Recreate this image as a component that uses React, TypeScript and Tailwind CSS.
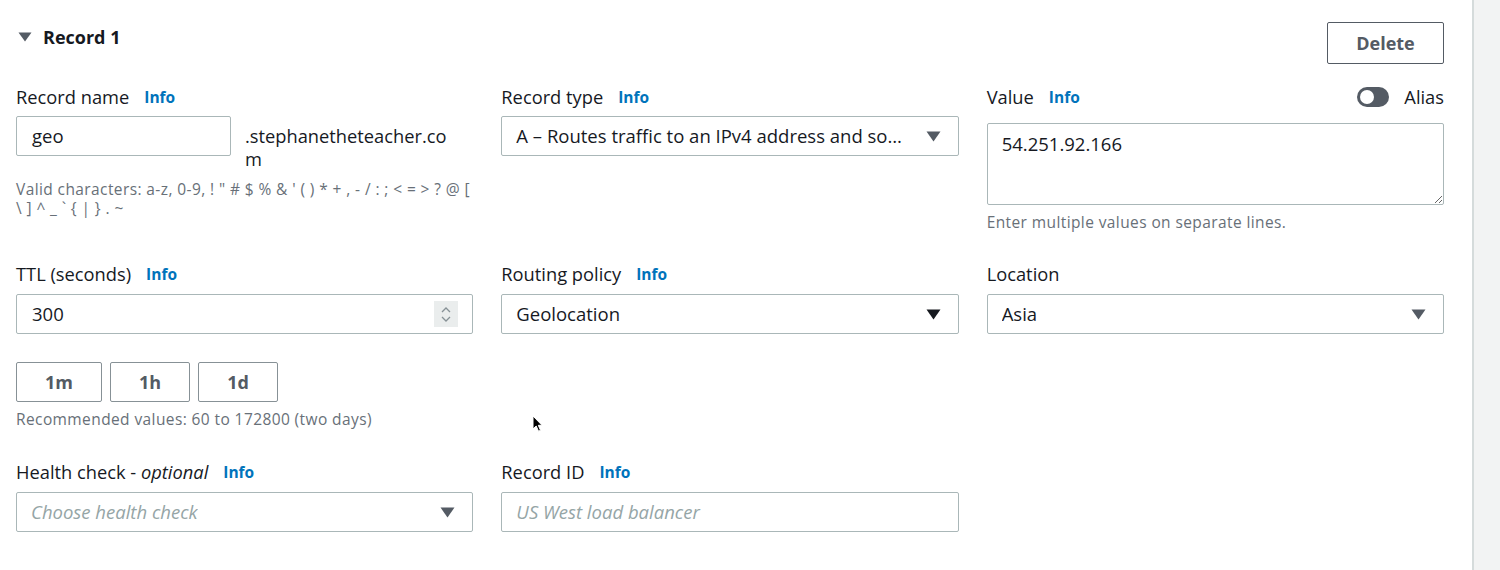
import type { ReactNode } from "react";

const FONT = { fontFamily: '"Open Sans", "Noto Sans", Arial, sans-serif' };

function Caret({ className = "text-[#545b64]" }: { className?: string }) {
  return (
    <svg width="15" height="11" viewBox="0 0 15 11" className={`shrink-0 ${className}`}>
      <path d="M0.5 0.5h14L7.5 10.5z" fill="currentColor" />
    </svg>
  );
}

function Label({ children, info = true }: { children: ReactNode; info?: boolean }) {
  return (
    <div className="flex h-[22px] items-center gap-[15px] text-[18.3px] leading-[22px] text-[#16191f]">
      <span>{children}</span>
      {info && <span className="text-[15.5px] font-bold text-[#0073bb]">Info</span>}
    </div>
  );
}

function Select({ value, placeholder, caretClass }: { value?: string; placeholder?: string; caretClass?: string }) {
  return (
    <div className="flex h-[40px] items-center justify-between gap-[16px] rounded-[2px] border border-[#aab7b8] bg-white pl-[14px] pr-[17px]">
      {value ? (
        <span className="min-w-0 truncate text-[18.5px] text-[#16191f]">{value}</span>
      ) : (
        <span className="min-w-0 truncate text-[18.5px] italic text-[#95a5a6]">{placeholder}</span>
      )}
      <Caret className={caretClass} />
    </div>
  );
}

function Hint({ children }: { children: ReactNode }) {
  return <div className="text-[15.5px] leading-[19px] tracking-[0.4px] text-[#687078]">{children}</div>;
}

function Toggle() {
  return (
    <div className="flex h-[20px] w-[32px] items-center rounded-full bg-[#545b64] px-[3px]">
      <div className="size-[14px] rounded-full bg-white" />
    </div>
  );
}

function Spinner() {
  return (
    <div className="flex h-[26px] w-[24px] flex-col items-center justify-center gap-[3px] bg-[#eaeded]">
      <svg width="10" height="6" viewBox="0 0 10 6">
        <path d="M1 5l4-4 4 4" fill="none" stroke="#879196" strokeWidth="1.3" />
      </svg>
      <svg width="10" height="6" viewBox="0 0 10 6">
        <path d="M1 1l4 4 4-4" fill="none" stroke="#879196" strokeWidth="1.3" />
      </svg>
    </div>
  );
}

function Cursor() {
  return (
    <svg width="12" height="18" viewBox="0 0 12 18" className="absolute left-[532px] top-[415px]">
      <path d="M1 1v13l3.2-3 2.3 5.2 2-0.9-2.2-5H10z" fill="#000" stroke="#fff" strokeWidth="1" />
    </svg>
  );
}

export default function App() {
  return (
    <div className="flex h-[570px] w-[1500px] overflow-hidden bg-white" style={FONT}>
      <div className="relative flex-1 pl-[16px] pr-[28px] pt-[22px]">
        <div className="flex items-start justify-between">
          <div className="mt-[3px] flex items-center gap-[11px] text-[18px] font-bold leading-[24px] text-[#16191f]">
            <svg width="14" height="10" viewBox="0 0 14 10" className="ml-[2px] text-[#545b64]">
              <path d="M0.5 0.5h13L7 9.5z" fill="currentColor" />
            </svg>
            <span>Record 1</span>
          </div>
          <button className="h-[42px] w-[117px] rounded-[2px] border border-[#545b64] text-[18px] font-bold text-[#545b64]">
            Delete
          </button>
        </div>

        <div className="mt-[22px] grid grid-cols-3 gap-x-[28px]">
          <div>
            <Label>Record name</Label>
            <div className="mt-[8px] flex items-start gap-[14px]">
              <div className="flex h-[40px] w-[215px] shrink-0 items-center rounded-[2px] border border-[#aab7b8] pl-[15px] text-[18.5px] text-[#16191f]">
                geo
              </div>
              <div className="pt-[8px] text-[18.3px] leading-[23px] text-[#16191f]">
                .stephanetheteacher.co
                <br />m
              </div>
            </div>
            <div className="mt-[10px]">
              <Hint>
                Valid characters: a-z, 0-9, ! " # $ % &amp; ' ( ) * + , - / : ; &lt; = &gt; ? @ [
                <br />\ ] ^ _ ` {"{"} | {"}"} . ~
              </Hint>
            </div>
          </div>

          <div>
            <Label>Record type</Label>
            <div className="mt-[8px]">
              <Select value="A – Routes traffic to an IPv4 address and some AWS resources" />
            </div>
          </div>

          <div>
            <div className="flex h-[22px] items-center justify-between">
              <Label>Value</Label>
              <div className="flex items-center gap-[15px] text-[18.3px] text-[#16191f]">
                <Toggle />
                <span>Alias</span>
              </div>
            </div>
            <textarea
              readOnly
              defaultValue="54.251.92.166"
              className="mt-[15px] block h-[82px] w-full resize-y rounded-[2px] border border-[#aab7b8] pl-[14px] pt-[9px] text-[18.5px] leading-[22px] text-[#16191f] outline-none"
            />
            <div className="mt-[8px]">
              <Hint>Enter multiple values on separate lines.</Hint>
            </div>
          </div>
        </div>

        <div className="mt-[31px] grid grid-cols-3 gap-x-[28px]">
          <div>
            <Label>TTL (seconds)</Label>
            <div className="mt-[9px] flex h-[40px] items-center justify-between rounded-[2px] border border-[#aab7b8] pl-[15px] pr-[14px] text-[18.5px] text-[#16191f]">
              <span>300</span>
              <Spinner />
            </div>
            <div className="mt-[28px] flex gap-[8px]">
              {[
                ["1m", "w-[86px]"],
                ["1h", "w-[80px]"],
                ["1d", "w-[80px]"],
              ].map(([t, w]) => (
                <button
                  key={t}
                  className={`h-[40px] ${w} rounded-[2px] border border-[#879196] text-[18px] font-bold text-[#545b64]`}
                >
                  {t}
                </button>
              ))}
            </div>
            <div className="mt-[8px]">
              <Hint>Recommended values: 60 to 172800 (two days)</Hint>
            </div>
          </div>

          <div>
            <Label>Routing policy</Label>
            <div className="mt-[9px]">
              <Select value="Geolocation" caretClass="text-[#16191f]" />
            </div>
          </div>

          <div>
            <Label info={false}>Location</Label>
            <div className="mt-[9px]">
              <Select value="Asia" />
            </div>
          </div>
        </div>

        <div className="mt-[32px] grid grid-cols-3 gap-x-[28px]">
          <div>
            <Label>
              Health check - <i>optional</i>
            </Label>
            <div className="mt-[9px]">
              <Select placeholder="Choose health check" />
            </div>
          </div>
          <div>
            <Label>Record ID</Label>
            <div className="mt-[9px] flex h-[40px] items-center rounded-[2px] border border-[#aab7b8] pl-[14px] text-[18.5px] italic text-[#95a5a6]">
              US West load balancer
            </div>
          </div>
          <div />
        </div>

        <Cursor />
      </div>
      <div className="w-[28px] border-l-2 border-[#d5dbdb] bg-[#f2f3f3]" />
    </div>
  );
}
